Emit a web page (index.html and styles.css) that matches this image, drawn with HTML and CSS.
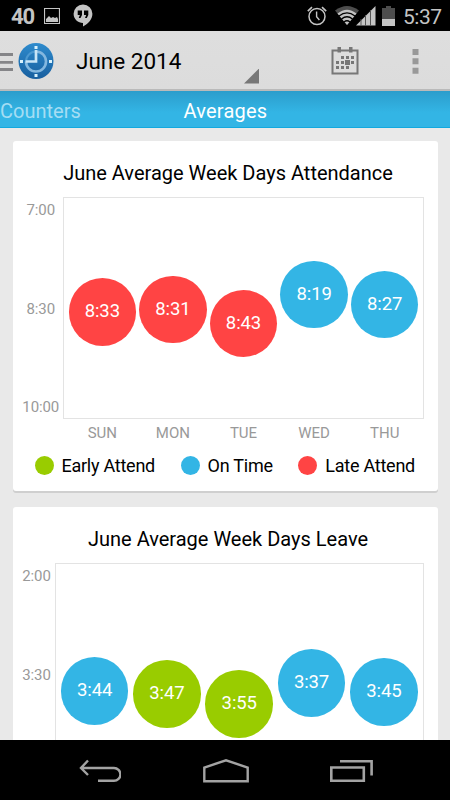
FILE: index.html
```html
<!DOCTYPE html>
<html lang="en">
<head>
<meta charset="utf-8">
<title>Averages</title>
<link rel="stylesheet" href="styles.css">
</head>
<body>
<header class="status">
  <span class="status-count">40</span>
  <svg class="icon-picture" width="16" height="16" viewBox="0 0 16 16"><path d="M.5.5h15v15H.5z" fill="none" stroke="#c4c4c4" stroke-width="1.2"/><path d="M2 14v-3l3-3 2 2 2-1 2 1 2-1 1 2v3z" fill="#c4c4c4"/></svg>
  <svg class="icon-hangouts" width="20" height="23" viewBox="0 0 20 23"><path d="M10 .5a9.3 9.3 0 0 0-9.4 9.3c0 5.4 4.5 9.2 9.4 9.2v3.5c5.8-3 9.4-7.500 9.400-12.700A9.300 9.300 0 0 0 10 .5z" fill="#c4c4c4"/><path d="M4.700 6.500h4.300v4.500L7.500 14H5.700l1.200-3H4.700zM11 6.500h4.300v4.500l-1.500 3H12l1.200-3H11z" fill="#000"/></svg>
  <span class="spacer"></span>
  <svg class="icon-alarm" width="20" height="20" viewBox="0 0 20 20" fill="none" stroke="#c4c4c4"><circle cx="10" cy="10.500" r="8" stroke-width="1.500"/><path d="M9.600 5.500v5.200l2.800 3.300" stroke-width="1.400"/><path d="M.8 5.200 5 1.200M19.200 5.200 15 1.200" stroke-width="1.600"/></svg>
  <svg class="icon-signals" width="42" height="20" viewBox="0 0 42 20"><path d="M0 4.500Q12-4.500 24 4.500L12 19z" fill="#4d4d4d"/><path d="M2.500 7.500Q12-.2 21.500 7.500L12 19z" fill="#c4c4c4"/><path d="M4 10q8-6.200 16 0M6.500 13q5.500-4.500 11 0M9 16q3-2.500 6 0" fill="none" stroke="#000" stroke-width="1.300"/><path d="M21 19.500 40.500 0v19.500z" fill="#c4c4c4"/><path d="M26 13v7M30.500 9v11M35.500 4v16" stroke="#555" stroke-width="1"/></svg>
  <svg class="icon-battery" width="13" height="20" viewBox="0 0 13 20"><path d="M0 2h4V0h5v2h4v18H0z" fill="#4d4d4d"/><path d="M0 13h13v7H0z" fill="#c4c4c4"/></svg>
  <span class="status-time">5:37</span>
</header>

<div class="actionbar">
  <svg class="icon-drawer" width="13" height="20" viewBox="0 0 13 20"><path d="M0 2.500h13M0 10.300h13M0 17.500h13" stroke="#858588" stroke-width="2.800"/></svg>
  <svg class="icon-clock" width="36" height="38" viewBox="0 0 36 38">
    <defs><linearGradient id="face" x1="0" y1="0" x2="0" y2="1"><stop offset="0" stop-color="#2e8bcd"/><stop offset="1" stop-color="#185f9f"/></linearGradient></defs>
    <ellipse cx="18" cy="19" rx="17.500" ry="18" fill="url(#face)"/>
    <path d="M18 9.500A10 10 0 1 1 8 19.500" fill="none" stroke="#83b7df" stroke-width="2.600"/>
    <path d="M8 19.500a10 10 0 0 1 10-10" fill="none" stroke="#4b98d0" stroke-width="2"/>
    <path d="M18 8v11.500H7.500" fill="none" stroke="#c9e5f7" stroke-width="2.700"/>
    <path d="M16.500 4h3v3h-3zM16.500 32h3v3h-3zM2 18h3v3H2zM31 18h3v3h-3z" fill="#d9f2fd"/>
  </svg>
  <div class="picker"><span>June 2014</span><i class="picker-mark"></i></div>
  <svg class="icon-calendar" width="28" height="28" viewBox="0 0 28 28"><path d="M1.500 3.500h25v23h-25z" fill="none" stroke="#777" stroke-width="2"/><path d="M6.500 0h3.500v5.500H6.500zM18 0h3.500v5.500H18z" fill="#777"/><path d="M10 9h3v3h-3zM15 9h3v3h-3zM20 9h3v3h-3zM5 14h3v3H5zM10 14h3v3h-3zM20 14h3v3h-3zM5 19h3v3H5zM10 19h3v3h-3zM15 19h3v3h-3zM14 13h5v5h-5z" fill="#777"/></svg>
  <svg class="icon-more" width="7" height="25" viewBox="0 0 7 25"><path d="M.5 0h6v6h-6zM.5 9.300h6v6h-6zM.5 18.700h6v6h-6z" fill="#999"/></svg>
</div>

<nav class="tabs"><span class="tab tab-side">Counters</span><span class="tab tab-active">Averages</span></nav>

<main class="content">
  <section class="card">
    <h2>June Average Week Days Attendance</h2>
    <div class="chart">
      <div class="scale"><span>7:00</span><span>8:30</span><span>10:00</span></div>
      <div class="plot">
        <span class="dot late" style="--y:80px">8:33</span>
        <span class="dot late" style="--y:77.500px">8:31</span>
        <span class="dot late" style="--y:91.500px">8:43</span>
        <span class="dot ontime" style="--y:62.500px">8:19</span>
        <span class="dot ontime" style="--y:72.500px">8:27</span>
      </div>
      <div class="days"><span>SUN</span><span>MON</span><span>TUE</span><span>WED</span><span>THU</span></div>
    </div>
    <div class="legend">
      <span class="key"><i class="early"></i>Early Attend</span>
      <span class="key"><i class="ontime"></i>On Time</span>
      <span class="key"><i class="late"></i>Late Attend</span>
    </div>
  </section>

  <section class="card">
    <h2>June Average Week Days Leave</h2>
    <div class="chart chart-leave">
      <div class="scale"><span>2:00</span><span>3:30</span><span></span></div>
      <div class="plot">
        <span class="dot ontime" style="--y:93px">3:44</span>
        <span class="dot early" style="--y:96px">3:47</span>
        <span class="dot early" style="--y:106px">3:55</span>
        <span class="dot ontime" style="--y:85px">3:37</span>
        <span class="dot ontime" style="--y:94px">3:45</span>
      </div>
    </div>
  </section>
</main>

<footer class="navbar">
  <svg width="42" height="24" viewBox="0 0 42 24" fill="none" stroke="#a3a3a3" stroke-width="2.400"><path d="M9 1.500 2 9l7 7M2 9h33a6.400 6.400 0 0 1 0 12.800H19"/></svg>
  <svg width="46" height="24" viewBox="0 0 46 24" fill="none" stroke="#a3a3a3" stroke-width="2.400"><path d="M1.300 22.300V8.500L23 1.300l21.700 7.200v13.800z"/></svg>
  <svg width="43" height="24" viewBox="0 0 43 24" fill="none" stroke="#a3a3a3" stroke-width="2.600"><path d="M1.300 8.500h32.500v13.200H1.300zM10 2.300h31.600v14.200"/></svg>
</footer>
</body>
</html>
```
FILE: styles.css
```css
* { box-sizing: border-box; }
body {
  margin: 0;
  width: 450px;
  height: 800px;
  display: flex;
  flex-direction: column;
  overflow: hidden;
  background: #e9e9e9;
  color: #000;
  font-family: Roboto, "Liberation Sans", sans-serif;
}
svg { display: block; flex: none; }
.spacer { flex: 1; }

.status {
  flex: none;
  height: 31px;
  display: flex;
  align-items: center;
  padding: 0 9px 0 11px;
  background: #000;
  color: #c4c4c4;
}
.status-count { width: 33px; font-size: 22px; font-weight: 700; letter-spacing: -1.2px; padding-top: 1px; }
.icon-picture { margin-top: 1px; }
.icon-hangouts { margin-left: 13px; }
.icon-alarm { margin-right: 8px; }
.icon-battery { margin: 0 8px 0 5px; }
.status-time { width: 38px; font-size: 21px; letter-spacing: -0.5px; white-space: nowrap; padding-top: 2px; }

.actionbar {
  flex: none;
  height: 60px;
  display: flex;
  align-items: center;
  padding: 2px 31px 0 0;
  background: linear-gradient(#dedede, #dcdcdc);
  border-bottom: 2px solid #bababa;
}
.icon-drawer { margin-top: 2px; }
.icon-clock { margin-left: 5px; }
.picker {
  width: 183px;
  margin: 0 72px 0 22px;
  height: 45px;
  display: flex;
  justify-content: space-between;
  align-items: center;
  font-size: 22.500px;
}
.picker-mark {
  align-self: flex-end;
  width: 15px;
  height: 15px;
  background: #777;
  clip-path: polygon(100% 0, 100% 100%, 0 100%);
}
.icon-more { margin-left: auto; }

.tabs {
  flex: none;
  height: 37px;
  display: grid;
  grid-template-columns: 183.500px 1fr;
  align-items: center;
  background: linear-gradient(#2b9dcc, #33b5e5 60%);
  border-bottom: 1px solid #12a9df;
  font-size: 20px;
  letter-spacing: 0.2px;
  padding-top: 3px;
}
.tab { color: #a5ddf3; }
.tab-side { letter-spacing: 0; }
.tab-active { color: #fff; }

.content {
  flex: 1;
  min-height: 0;
  overflow: hidden;
  padding: 13px 12.500px 0;
}
.card {
  height: 350px;
  margin-bottom: 16px;
  background: #fff;
  border-radius: 3px;
  box-shadow: 0 2px 0 #cfcfcf;
}
h2 {
  margin: 0;
  height: 56px;
  padding: 3px 0 0 6px;
  line-height: 58px;
  text-align: center;
  font-size: 20px;
  font-weight: 400;
  white-space: nowrap;
}

.chart {
  display: grid;
  grid-template-columns: 50.500px 361px;
  grid-template-rows: 222px 28px;
}
.chart-leave { grid-template-columns: 42px 369.500px; }
.scale {
  display: flex;
  flex-direction: column;
  justify-content: space-between;
  text-align: center;
  padding: 1px 0 0 6px;
  line-height: 24px;
  font-size: 15px;
  color: #999;
}
.scale span { height: 24px; letter-spacing: -0.1px; }
.plot {
  display: grid;
  grid-template-columns: repeat(5, 1fr);
  justify-items: center;
  padding: 0 3px;
  border: 1px solid #e3e3e3;
}
.dot {
  width: 67.500px;
  height: 67.500px;
  margin-top: var(--y);
  border-radius: 50%;
  line-height: 67px;
  text-align: center;
  color: #fff;
  font-size: 18.500px;
  letter-spacing: -0.1px;
}
.early { background: #99cc00; }
.ontime { background: #33b5e5; }
.late { background: #ff4444; }
.days {
  grid-column: 2;
  display: grid;
  grid-template-columns: repeat(5, 1fr);
  padding: 0 4px;
  text-align: center;
  line-height: 28px;
  font-size: 15px;
  color: #999;
}

.legend {
  display: flex;
  justify-content: space-between;
  padding: 7px 22.500px 0 22px;
  font-size: 18px;
  letter-spacing: -0.25px;
  line-height: 24px;
}
.key { display: flex; align-items: center; gap: 8px; white-space: nowrap; }
.key i { width: 19px; height: 19px; margin-bottom: 2px; border-radius: 50%; }

.navbar {
  flex: none;
  height: 60px;
  display: flex;
  justify-content: space-between;
  align-items: center;
  padding: 2px 77px 0 79px;
  background: #000;
}
```
